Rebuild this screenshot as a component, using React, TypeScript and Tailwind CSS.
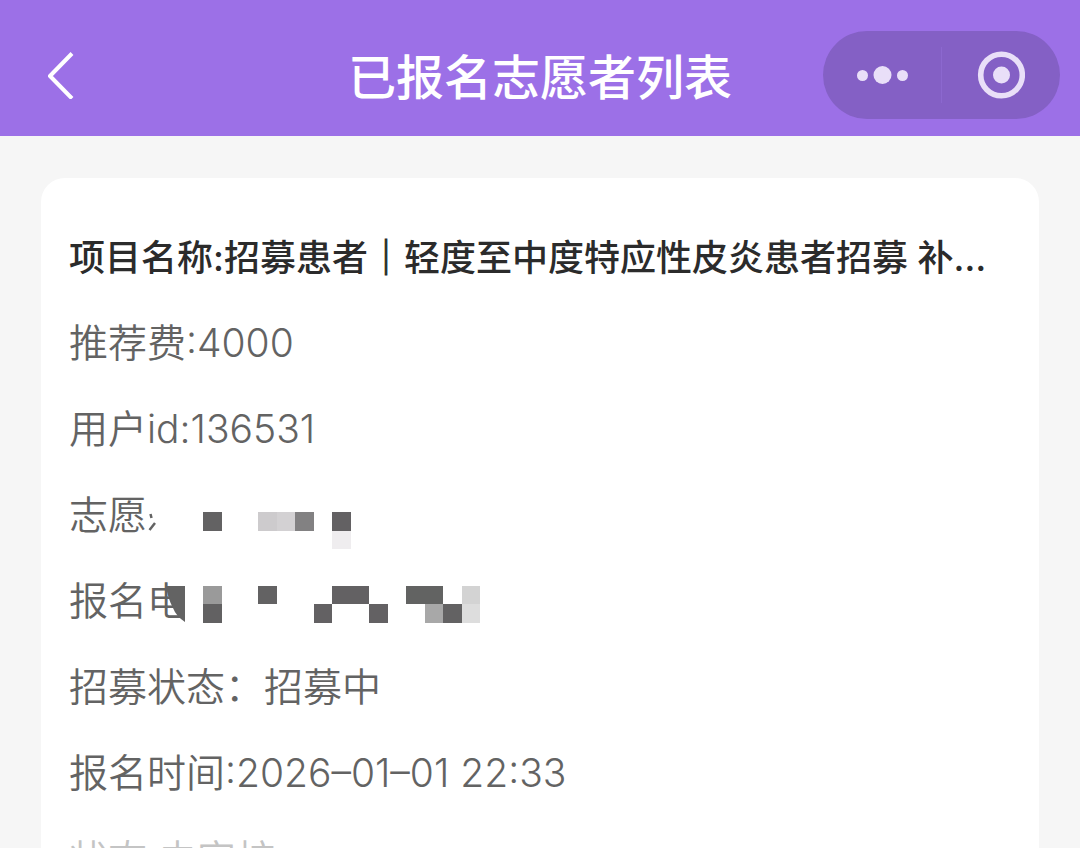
import type { ReactNode } from "react";

type Cell = { x: number; y: number; w: number; h: number; fill: string };

const nameCells: Cell[] = [
  { x: 55, y: 40, w: 19, h: 19, fill: "#636263" },
  { x: 110, y: 40, w: 19, h: 19, fill: "#cdcbcd" },
  { x: 129, y: 40, w: 18, h: 19, fill: "#d3d1d3" },
  { x: 147, y: 40, w: 19, h: 19, fill: "#828182" },
  { x: 184, y: 40, w: 19, h: 19, fill: "#636163" },
  { x: 184, y: 59, w: 19, h: 18, fill: "#efedef" },
];

const phoneCells: Cell[] = [
  { x: 55, y: 28, w: 19, h: 18, fill: "#9a9a9a" },
  { x: 55, y: 46, w: 19, h: 19, fill: "#626162" },
  { x: 110, y: 28, w: 19, h: 18, fill: "#636263" },
  { x: 166, y: 46, w: 18, h: 19, fill: "#636163" },
  { x: 184, y: 28, w: 37, h: 18, fill: "#636163" },
  { x: 221, y: 46, w: 19, h: 19, fill: "#636163" },
  { x: 258, y: 28, w: 37, h: 18, fill: "#626362" },
  { x: 277, y: 46, w: 18, h: 19, fill: "#a8a8a8" },
  { x: 295, y: 46, w: 19, h: 19, fill: "#636263" },
  { x: 314, y: 28, w: 18, h: 19, fill: "#d3d3d3" },
  { x: 314, y: 46, w: 18, h: 19, fill: "#dddddd" },
];

function Mosaic({ cells, children }: { cells: Cell[]; children?: ReactNode }) {
  return (
    <svg
      className="absolute left-[79px] top-0 h-[86px] w-[334px]"
      viewBox="0 0 334 86"
      aria-hidden="true"
    >
      {cells.map((c) => (
        <rect key={`${c.x}-${c.y}`} x={c.x} y={c.y} width={c.w} height={c.h} fill={c.fill} shapeRendering="crispEdges" />
      ))}
      {children}
    </svg>
  );
}

function Row({ children, className = "" }: { children: ReactNode; className?: string }) {
  return <li className={`relative h-[86px] whitespace-nowrap leading-[86px] ${className}`}>{children}</li>;
}

export default function App() {
  return (
    <div className="flex h-screen flex-col overflow-hidden bg-[#f6f6f6] font-['Inter','Noto_Sans_CJK_SC',sans-serif]">
      <header className="grid h-[136px] shrink-0 grid-cols-[1fr_auto_1fr] items-center bg-[#9c70e7] px-5 pt-[14px]">
        <button type="button" aria-label="返回" className="ml-5 w-10">
          <svg className="h-12 w-10" viewBox="0 0 40 48" fill="none" stroke="#fff" strokeWidth="4" strokeLinejoin="round">
            <path d="M32 2.500 10 25l22 22.500" />
          </svg>
        </button>
        <h1 className="pt-1.5 text-5xl font-medium text-white">已报名志愿者列表</h1>
        <div className="flex h-[88px] w-[237px] items-center justify-self-end rounded-full bg-[#8460c5]">
          <button type="button" aria-label="更多" className="flex h-full flex-1 items-center justify-center">
            <svg className="h-5 w-[52px]" viewBox="0 0 52 20" fill="#e9dff8">
              <circle cx="6.5" cy="10.5" r="5.5" />
              <circle cx="26.5" cy="10" r="9" />
              <circle cx="46.5" cy="10.5" r="5.5" />
            </svg>
          </button>
          <span className="h-14 w-px bg-[#8c68cf]" />
          <button type="button" aria-label="关闭" className="flex h-full flex-1 items-center justify-center">
            <svg className="size-12" viewBox="0 0 48 48">
              <circle cx="24.5" cy="24" r="20.8" fill="none" stroke="#e9dff8" strokeWidth="5.6" />
              <circle cx="24.5" cy="24" r="8.5" fill="#e9dff8" />
            </svg>
          </button>
        </div>
      </header>

      <main className="px-[41px] pt-[42px]">
        <article className="rounded-[24px] bg-white px-[28px] pb-9 pt-9">
          <h2 className="h-[86px] truncate text-[36px] font-medium leading-[88px] text-[#2b2b2b]">
            项目名称:招募患者<span className="[-webkit-text-stroke:1px_#2b2b2b]">｜</span>轻度至中度特应性皮炎患者招募 补贴交通费
          </h2>
          <ul className="text-[39px] font-[350] text-[#636363]">
            <Row>推荐费:4000</Row>
            <Row>用户id:136531</Row>
            <Row>
              志愿
              <Mosaic cells={nameCells}>
                <path d="M2.500 42l1 4M1.500 58l5.500-7" stroke="#636363" strokeWidth="2.5" fill="none" />
              </Mosaic>
            </Row>
            <Row>
              报名电
              <Mosaic cells={phoneCells}>
                <rect x="37" y="20" width="8" height="48" fill="#fff" />
                <path d="M18 28h19v36q-9-6-12-14q-5-9-7-22z" fill="#636363" />
              </Mosaic>
            </Row>
            <Row>招募状态：招募中</Row>
            <Row>报名时间:2026–01–01 22:33</Row>
            <Row className="text-[#c4c4c4]">状态:未审核</Row>
          </ul>
        </article>
      </main>
    </div>
  );
}
